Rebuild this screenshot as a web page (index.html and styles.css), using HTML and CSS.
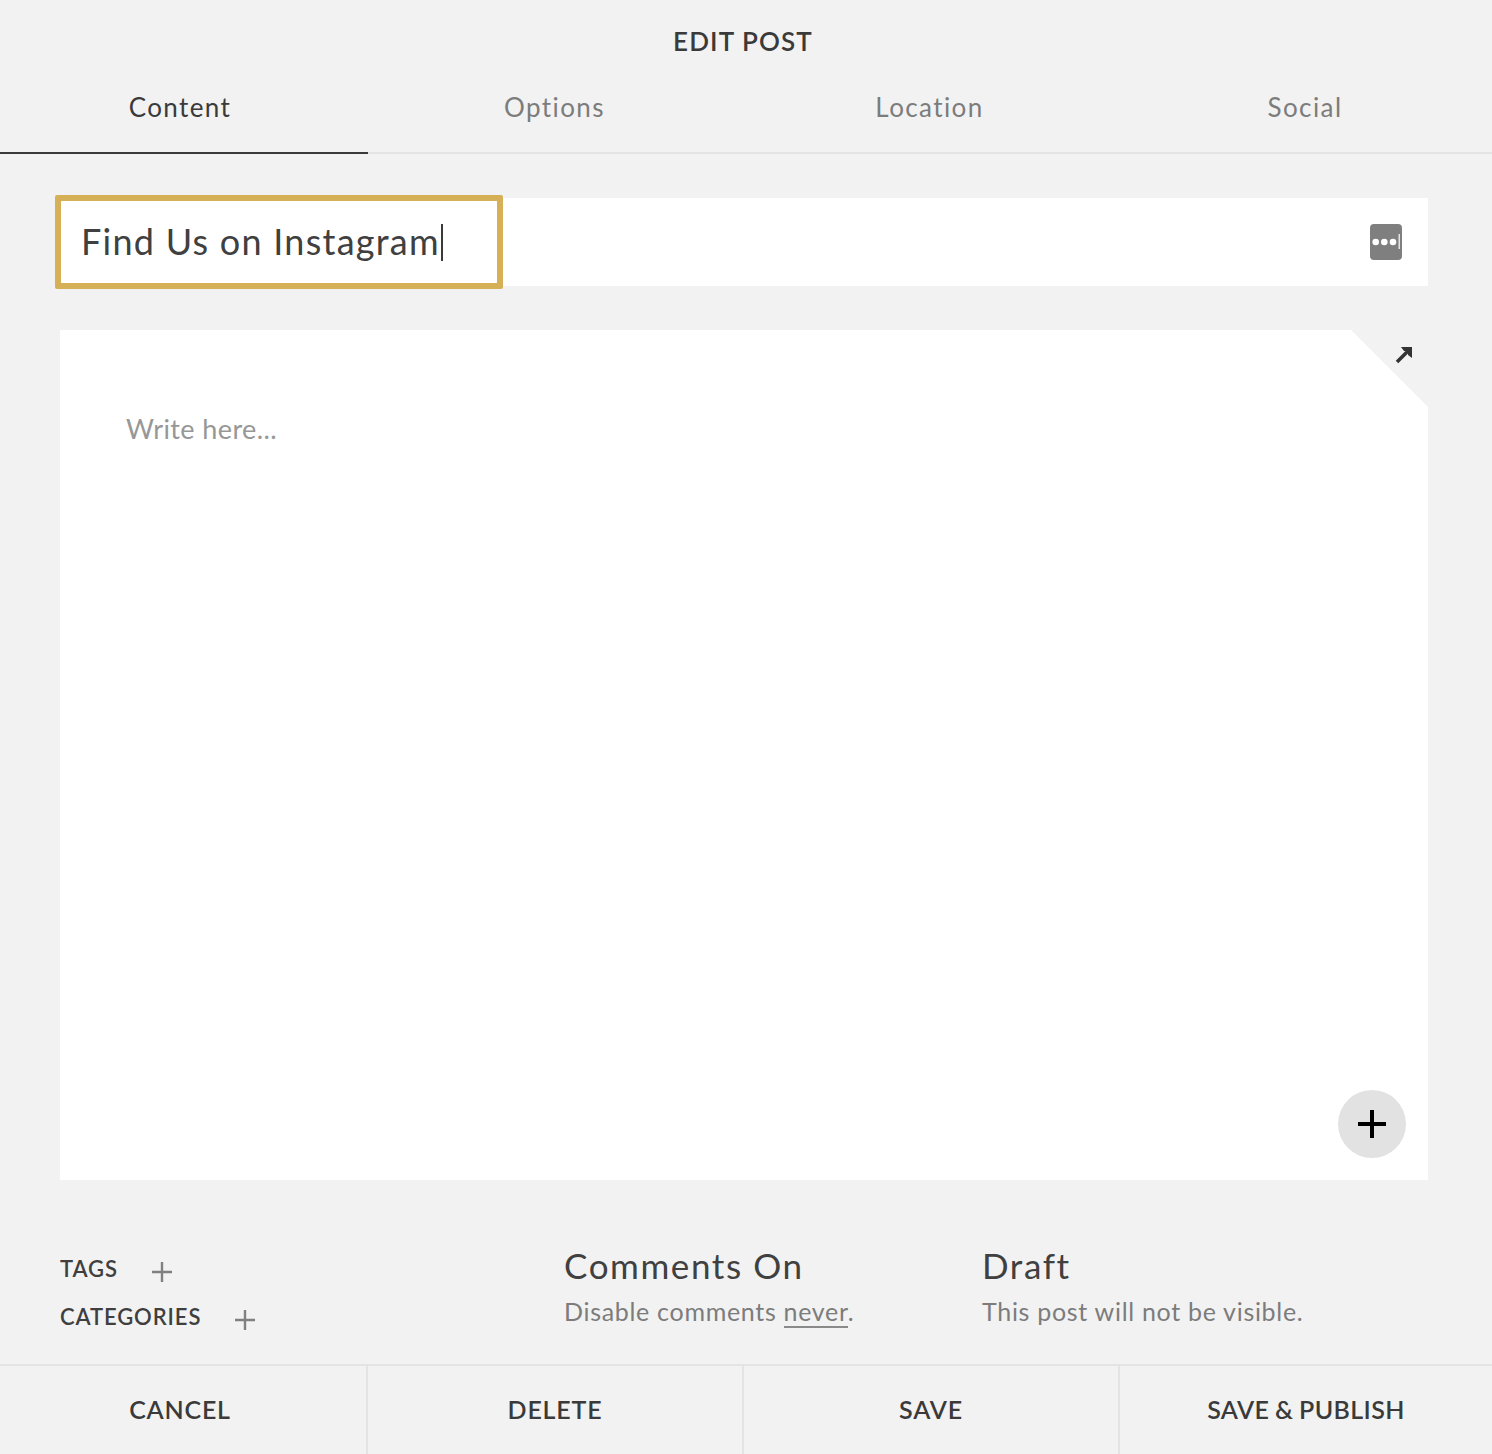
FILE: index.html
```html
<!DOCTYPE html>
<html lang="en">
<head>
<meta charset="utf-8">
<title>Edit Post</title>
<link rel="stylesheet" href="styles.css">
</head>
<body>
<div class="dialog">
  <header class="head">
    <h1 class="heading">EDIT POST</h1>
    <nav class="tabs">
      <div class="tab tab-first tab-active">Content</div>
      <div class="tab">Options</div>
      <div class="tab">Location</div>
      <div class="tab">Social</div>
    </nav>
  </header>
  <main class="body">
    <div class="title-bar">
      <div class="title-field"><span class="title-text">Find Us on Instagram</span><span class="caret"></span></div>
      <svg class="dots" width="32" height="36" viewBox="0 0 32 36">
        <rect width="32" height="36" rx="4" fill="#7f7f7f"/>
        <circle cx="5.700" cy="18" r="3.300" fill="#fff"/>
        <circle cx="14.300" cy="18" r="3.300" fill="#fff"/>
        <circle cx="23" cy="18" r="3.300" fill="#fff"/>
        <rect x="28.500" y="10" width="1.500" height="15" fill="#e4e4e4"/>
      </svg>
    </div>
    <div class="editor-wrap">
      <div class="editor">
        <p class="placeholder">Write here...</p>
        <div class="add-btn">
          <svg width="28" height="28" viewBox="0 0 28 28"><path d="M0 14H28M14 0V28" stroke="#000" stroke-width="4" fill="none"/></svg>
        </div>
      </div>
      <svg class="expand" width="18" height="18" viewBox="0 0 18 18"><path d="M2 16L13 5" stroke="#333" stroke-width="3.600" fill="none"/><path d="M6 1H17V12L13 9V5H9Z" fill="#333"/></svg>
    </div>
    <div class="meta">
      <div class="labels">
        <div class="label-row"><span class="label">TAGS</span><svg class="plus" width="20" height="20" viewBox="0 0 20 20"><path d="M0 10H20M10 0V20" stroke="#808080" stroke-width="2.400" fill="none"/></svg></div>
        <div class="label-row"><span class="label">CATEGORIES</span><svg class="plus" width="20" height="20" viewBox="0 0 20 20"><path d="M0 10H20M10 0V20" stroke="#808080" stroke-width="2.400" fill="none"/></svg></div>
      </div>
      <div class="status">
        <div class="status-title">Comments On</div>
        <div class="status-sub">Disable comments <span class="link">never</span>.</div>
      </div>
      <div class="status">
        <div class="status-title">Draft</div>
        <div class="status-sub">This post will not be visible.</div>
      </div>
    </div>
  </main>
  <footer class="foot">
    <div class="action action-first">CANCEL</div>
    <div class="action">DELETE</div>
    <div class="action">SAVE</div>
    <div class="action action-last">SAVE &amp; PUBLISH</div>
  </footer>
</div>
</body>
</html>
```
FILE: styles.css
```css
* { box-sizing: border-box; }
html, body { margin: 0; padding: 0; }
body { background: #f2f2f2; font-family: "Lato", "Open Sans", sans-serif; color: #3a3a3a; }
.dialog { width: 1492px; height: 1454px; display: flex; flex-direction: column; overflow: hidden; background: #f2f2f2; }
.head { height: 154px; border-bottom: 2px solid #e4e4e4; display: flex; flex-direction: column; flex-shrink: 0; }
.heading { flex-shrink: 0; margin: 0; padding: 26px 6px 0 0; height: 74px; font-size: 26px; line-height: 30px; font-weight: 600; letter-spacing: 1.1px; text-align: center; color: #3a3a3a; }
.tabs { flex-shrink: 0; display: grid; grid-template-columns: 368px 373px 377px 374px; height: 80px; }
.tab { font-size: 26px; line-height: 66px; height: 80px; text-align: center; color: #7c7c7c; letter-spacing: 1.4px; }
.tab-first { padding-right: 8px; }
.tab-active { color: #3a3a3a; border-bottom: 2px solid #3a3a3a; }
.body { flex: 1; padding: 44px 64px 0 60px; display: flex; flex-direction: column; }
.title-bar { height: 88px; background: #fff; display: flex; align-items: center; justify-content: space-between; padding-right: 26px; }
.title-field { width: 448px; height: 94px; margin: -3px 0 -3px -5px; border: 6px solid #d6b057; border-radius: 2px; background: #fff; padding-left: 21px; display: flex; align-items: center; }
.title-text { font-size: 36px; letter-spacing: 1.25px; color: #404040; white-space: nowrap; margin-bottom: 2px; margin-left: -1px; }
.caret { width: 2px; height: 37px; margin-left: 1px; background: #3a3a3a; }
.dots { display: block; }
.editor-wrap { position: relative; margin-top: 44px; height: 850px; }
.editor { position: relative; height: 850px; background: #fff; padding: 81px 66px 0; clip-path: polygon(0 0, 1291px 0, 100% 77px, 100% 100%, 0 100%); }
.placeholder { margin: 0; font-size: 27px; line-height: 36px; color: #979797; letter-spacing: 0.4px; }
.add-btn { position: absolute; right: 22px; bottom: 22px; width: 68px; height: 68px; border-radius: 50%; background: #e2e2e2; display: flex; align-items: center; justify-content: center; }
.expand { position: absolute; left: 1335px; top: 16px; }
.meta { display: grid; grid-template-columns: 504px 418px 1fr; padding-top: 64px; }
.labels { display: flex; flex-direction: column; gap: 20px; padding-top: 11px; }
.label-row { display: flex; align-items: center; height: 28px; }
.label { font-size: 22px; line-height: 28px; font-weight: 600; color: #3f3f3f; letter-spacing: 0.9px; }
.plus { margin-left: 34px; margin-top: 6px; }
.status-title { font-size: 35px; line-height: 42px; color: #404040; letter-spacing: 1.6px; }
.status-sub { margin-top: 10px; font-size: 25px; line-height: 30px; color: #7c7c7c; letter-spacing: 0.7px; }
.link { border-bottom: 2px solid #8a8a8a; }
.foot { height: 90px; border-top: 2px solid #e4e4e4; display: grid; grid-template-columns: 368px 376px 376px 372px; flex-shrink: 0; }
.action { font-size: 25px; font-weight: 600; line-height: 86px; text-align: center; color: #3a3a3a; letter-spacing: 0.8px; border-right: 2px solid #e4e4e4; }
.action-first { padding-right: 6px; }
.action-last { border-right: 0; word-spacing: -1px; letter-spacing: 0.4px; }
```
